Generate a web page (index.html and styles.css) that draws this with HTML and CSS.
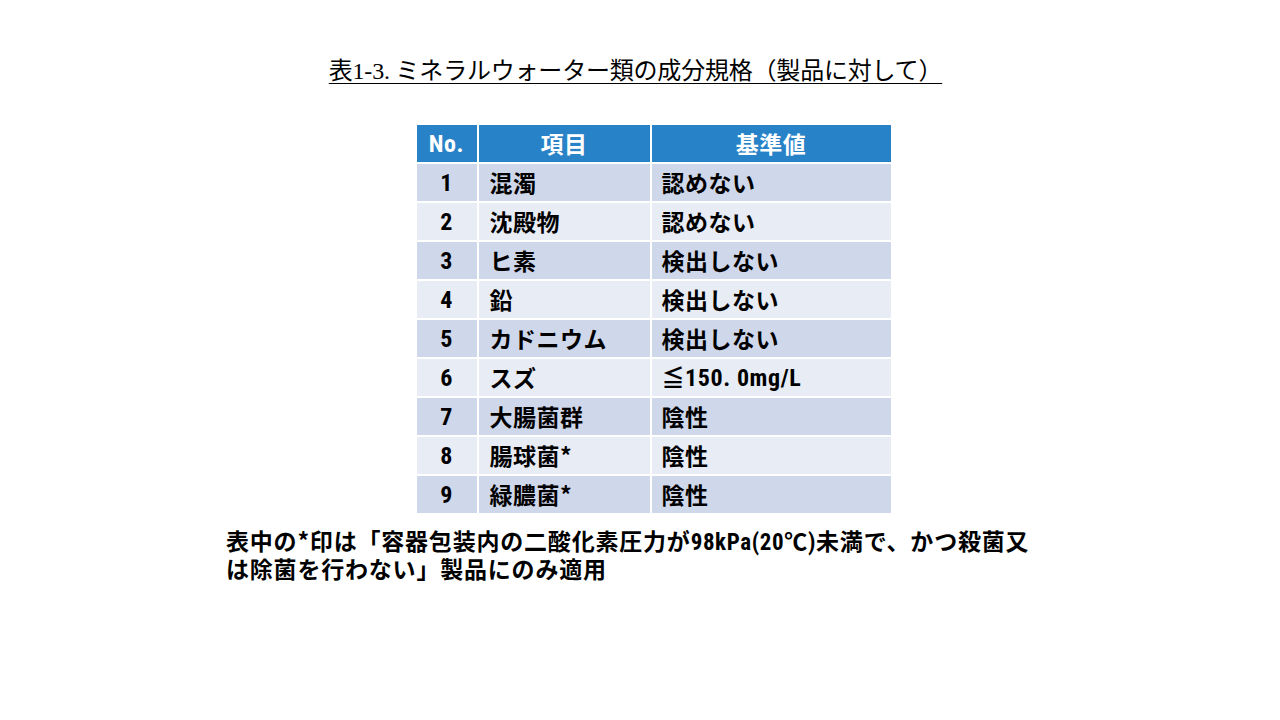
FILE: index.html
```html
<!DOCTYPE html>
<html lang="ja">
<head>
<meta charset="utf-8">
<link rel="stylesheet" href="styles.css">
</head>
<body>
<div class="slide">
  <h1 class="title">表1-3. ミネラルウォーター類の成分規格（製品に対して）</h1>
  <table class="spec">
    <thead>
      <tr><th class="no"><span class="num">No.</span></th><th class="item">項目</th><th class="std">基準値</th></tr>
    </thead>
    <tbody>
      <tr><td class="no"><span class="num">1</span></td><td>混濁</td><td>認めない</td></tr>
      <tr><td class="no"><span class="num">2</span></td><td>沈殿物</td><td>認めない</td></tr>
      <tr><td class="no"><span class="num">3</span></td><td>ヒ素</td><td>検出しない</td></tr>
      <tr><td class="no"><span class="num">4</span></td><td>鉛</td><td>検出しない</td></tr>
      <tr><td class="no"><span class="num">5</span></td><td>カドニウム</td><td>検出しない</td></tr>
      <tr><td class="no"><span class="num">6</span></td><td>スズ</td><td>≦<span class="num">150. 0mg/L</span></td></tr>
      <tr><td class="no"><span class="num">7</span></td><td>大腸菌群</td><td>陰性</td></tr>
      <tr><td class="no"><span class="num">8</span></td><td>腸球菌*</td><td>陰性</td></tr>
      <tr><td class="no"><span class="num">9</span></td><td>緑膿菌*</td><td>陰性</td></tr>
    </tbody>
  </table>
  <p class="note">表中の*印は「容器包装内の二酸化素圧力が<span class="num">98kPa(20</span>℃<span class="num">)</span>未満で、かつ殺菌又<br>は除菌を行わない」製品にのみ適用</p>
</div>
</body>
</html>
```
FILE: styles.css
```css
html, body {
  margin: 0;
  padding: 0;
  background: #ffffff;
}
.slide {
  width: 1280px;
  height: 720px;
  display: flex;
  flex-direction: column;
  align-items: center;
  font-family: "Noto Sans CJK JP", sans-serif;
  color: #000;
}
.title {
  margin: 54px 9px 0 0;
  font-family: "Liberation Serif", "Noto Sans CJK JP", serif;
  font-weight: 400;
  font-size: 24px;
  line-height: 34px;
  text-decoration: underline;
  text-decoration-thickness: 1px;
  text-underline-offset: 4px;
  letter-spacing: -0.2px;
}
.spec {
  margin-top: 37px;
  margin-left: 27px;
  border-collapse: collapse;
  width: 474px;
  font-size: 23px;
  font-weight: 700;
  letter-spacing: 0.5px;
}
.spec th, .spec td {
  height: 37px;
  padding: 0 0 0 10px;
  border: 2px solid #ffffff;
  text-align: left;
  line-height: 1;
  white-space: nowrap;
}
.spec tr:first-child th, .spec tr:first-child td { border-top: 0; }
.spec th:first-child, .spec td:first-child { border-left: 0; }
.spec th:last-child, .spec td:last-child { border-right: 0; }
.spec tbody tr:last-child td { border-bottom: 0; }
.spec thead th {
  background: #2882c7;
  color: #ffffff;
  text-align: center;
  padding: 0;
}
.spec .no { width: 60px; text-align: center; padding: 0; }
.spec .item { width: 171px; }
.spec tbody td:nth-child(2) { padding-left: 11px; }
.spec tbody tr:nth-child(odd) td { background: #cfd7ea; }
.spec tbody tr:nth-child(even) td { background: #e8ecf5; }
.num {
  font-family: "Roboto Condensed", "Liberation Sans", sans-serif;
  font-weight: 700;
  font-size: 24px;
  letter-spacing: 0.6px;
}
.note {
  align-self: flex-start;
  margin: 13px 0 0 226px;
  font-size: 23px;
  font-weight: 700;
  line-height: 28px;
  letter-spacing: 0.8px;
}
.note .num {
  font-size: 23px;
  line-height: 1;
}
```
